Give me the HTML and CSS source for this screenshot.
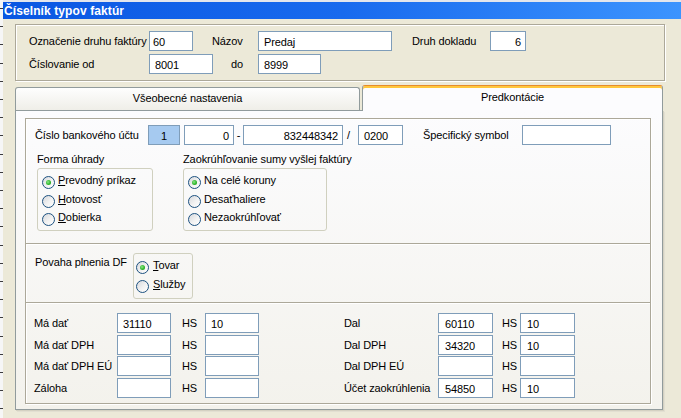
FILE: index.html
```html
<!DOCTYPE html>
<html lang="sk">
<head>
<meta charset="utf-8">
<title>Číselník typov faktúr</title>
<link rel="stylesheet" href="styles.css">
</head>
<body>
<div class="screen">
  <div class="strip"></div>
  <div class="window">
    <div class="titlebar">Číselník typov faktúr</div>
    <div class="client">
      <div class="head-box">
        <div class="head-grid">
          <span class="lbl">Označenie druhu faktúry</span>
          <div class="inp w44 pl3">60</div>
          <span class="lbl">Názov</span>
          <div class="inp w134">Predaj</div>
          <span class="lbl">Druh dokladu</span>
          <div class="inp w36 right">6</div>
          <span class="lbl">Číslovanie od</span>
          <div class="inp w64">8001</div>
          <span class="lbl pl19">do</span>
          <div class="inp w63">8999</div>
        </div>
      </div>

      <div class="tabs">
        <div class="tab tab-off">Všeobecné nastavenia</div>
        <div class="tab tab-on">Predkontácie</div>
      </div>

      <div class="panel">
        <div class="frame">
          <div class="sec sec1">
            <div class="bank-row">
              <span class="lbl bank-lbl">Číslo bankového účtu</span>
              <div class="inp w32 sel center">1</div>
              <div class="inp w50 right ml4">0</div>
              <span class="sep sep-dash">-</span>
              <div class="inp w100 right">832448342</div>
              <span class="sep sep-slash">/</span>
              <div class="inp w45">0200</div>
              <span class="lbl spec-lbl">Špecifický symbol</span>
              <div class="inp w89"></div>
            </div>
            <div class="opt-row">
              <div class="opt-col col-a">
                <span class="lbl">Forma úhrady</span>
                <div class="grp grp-a">
                  <div class="rrow"><span class="radio on"></span><span><u>P</u>revodný príkaz</span></div>
                  <div class="rrow"><span class="radio"></span><span><u>H</u>otovosť</span></div>
                  <div class="rrow"><span class="radio"></span><span><u>D</u>obierka</span></div>
                </div>
              </div>
              <div class="opt-col col-b">
                <span class="lbl">Zaokrúhľovanie sumy vyšlej faktúry</span>
                <div class="grp grp-b">
                  <div class="rrow"><span class="radio on"></span><span>Na celé koruny</span></div>
                  <div class="rrow"><span class="radio"></span><span>Desaťhaliere</span></div>
                  <div class="rrow"><span class="radio"></span><span>Nezaokrúhľovať</span></div>
                </div>
              </div>
            </div>
          </div>

          <div class="sec sec2">
            <span class="lbl povaha-lbl">Povaha plnenia DF</span>
            <div class="grp grp-c">
              <div class="rrow wide"><span class="radio on"></span><span><u>T</u>ovar</span></div>
              <div class="rrow wide"><span class="radio"></span><span><u>S</u>lužby</span></div>
            </div>
          </div>

          <div class="sec sec3">
            <div class="acc-grid">
              <span class="lbl">Má dať</span>
              <div class="inp">31110</div>
              <span class="lbl hs-l">HS</span>
              <div class="inp">10</div>
              <span></span>
              <span class="lbl">Dal</span>
              <div class="inp pl6">60110</div>
              <span class="lbl hs-r">HS</span>
              <div class="inp pl6">10</div>

              <span class="lbl">Má dať DPH</span>
              <div class="inp"></div>
              <span class="lbl hs-l">HS</span>
              <div class="inp"></div>
              <span></span>
              <span class="lbl">Dal DPH</span>
              <div class="inp pl6">34320</div>
              <span class="lbl hs-r">HS</span>
              <div class="inp pl6">10</div>

              <span class="lbl">Má dať DPH EÚ</span>
              <div class="inp"></div>
              <span class="lbl hs-l">HS</span>
              <div class="inp"></div>
              <span></span>
              <span class="lbl">Dal DPH EÚ</span>
              <div class="inp"></div>
              <span class="lbl hs-r">HS</span>
              <div class="inp"></div>

              <span class="lbl">Záloha</span>
              <div class="inp"></div>
              <span class="lbl hs-l">HS</span>
              <div class="inp"></div>
              <span></span>
              <span class="lbl">Účet zaokrúhlenia</span>
              <div class="inp pl6">54850</div>
              <span class="lbl hs-r">HS</span>
              <div class="inp pl6">10</div>
            </div>
          </div>
        </div>
      </div>
    </div>
  </div>
</div>
</body>
</html>
```

FILE: styles.css
```css
* { box-sizing: border-box; }
html, body { margin: 0; padding: 0; }
body {
  width: 681px;
  height: 418px;
  overflow: hidden;
  background: #ece9d8;
  font-family: "Liberation Sans", Arial, sans-serif;
  font-size: 11px;
  line-height: 14px;
  letter-spacing: -0.1px;
  color: #000;
}
.screen { display: flex; height: 418px; }
.strip {
  width: 3px;
  flex: none;
  background: repeating-linear-gradient(to bottom, #f6f6f6 0, #f6f6f6 8px, #3c3c3c 8px, #3c3c3c 9px, #f6f6f6 9px, #f6f6f6 18.2px);
}
.window { flex: 1; display: flex; flex-direction: column; min-width: 0; }
.titlebar {
  height: 19px;
  flex: none;
  border-top: 2px solid #e3e6ed;
  background: linear-gradient(to right, #0a57e2 0%, #186aee 50%, #3c94fe 100%);
  color: #fff;
  font-weight: bold;
  font-size: 12px;
  letter-spacing: 0.1px;
  line-height: 16px;
  padding: 1px 0 0 1px;
}
.client { flex: 1; padding: 5px 0 0 12px; }

/* generic */
.lbl { white-space: nowrap; }
.inp {
  height: 20px;
  border: 1px solid #7f9db9;
  background: #fff;
  padding: 2px 0 0 5px;
  line-height: 16px;
  white-space: nowrap;
  overflow: hidden;
}
.inp.right { text-align: right; padding-left: 0; padding-right: 4px; }
.inp.center { text-align: center; padding-left: 0; }
.inp.sel { background: #a6caf0; }
.pl3 { padding-left: 3px; }
.pl6 { padding-left: 6px; }
.pl19 { padding-left: 19px; }
.ml4 { margin-left: 4px; }
.w32 { width: 32px; }
.w36 { width: 36px; }
.w44 { width: 44px; }
.w45 { width: 45px; }
.w50 { width: 50px; }
.w63 { width: 63px; }
.w64 { width: 64px; }
.w89 { width: 89px; }
.w100 { width: 100px; }
.w134 { width: 134px; }

/* header group */
.head-box {
  width: 650px;
  height: 57px;
  border: 1px solid #aca899;
  box-shadow: inset 1px 1px 0 #fff, 1px 1px 0 #fff;
  padding: 6px 0 0 13px;
}
.head-grid {
  display: grid;
  grid-template-columns: 120px 63px 46px 154px 78px 36px;
  grid-template-rows: 20px 20px;
  row-gap: 3px;
  align-items: center;
}

/* tabs */
.tabs {
  display: flex;
  align-items: flex-end;
  gap: 2px;
  width: 648px;
  height: 25px;
  margin-top: 4px;
}
.tab {
  border: 1px solid #919b9c;
  border-bottom: none;
  border-radius: 3px 3px 0 0;
  text-align: center;
  white-space: nowrap;
}
.tab-off {
  width: 345px;
  height: 23px;
  padding-top: 3px;
  background: linear-gradient(#fefefe, #efeee8);
}
.tab-on {
  width: 301px;
  height: 26px;
  margin-bottom: -1px;
  position: relative;
  z-index: 1;
  padding-top: 4px;
  border-top-color: #e68b2c;
  box-shadow: inset 0 2px 0 #ffc73c;
  background: #fcfcfe;
}
.panel {
  width: 648px;
  height: 300px;
  border: 1px solid #919b9c;
  background: linear-gradient(#fcfcfe, #f3f2ec);
  box-shadow: 1px 1px 0 #d4d1c2, 2px 2px 0 #e2dfd1;
  padding: 7px 0 0 9px;
}
.frame {
  width: 626px;
  height: 286px;
  border: 1px solid #aca899;
  box-shadow: inset 1px 1px 0 #fff, 1px 1px 0 #fff;
  display: flex;
  flex-direction: column;
}
.sec + .sec {
  border-top: 1px solid #aca899;
  box-shadow: inset 0 1px 0 #fff;
}
.sec1 { height: 124px; padding: 6px 0 0 9px; }
.sec2 { height: 59px; padding: 9px 0 0 9px; display: flex; align-items: flex-start; }
.sec3 { height: 101px; padding: 10px 0 0 8px; }

/* bank row */
.bank-row { display: flex; align-items: center; height: 20px; }
.bank-lbl { width: 113px; }
.sep { height: 20px; line-height: 20px; }
.sep-dash { width: 9px; text-align: center; }
.sep-slash { width: 15px; padding-left: 4px; }
.spec-lbl { width: 99px; margin-left: 20px; }

/* option groups */
.opt-row { display: flex; margin-top: 7px; padding-left: 2px; }
.opt-col { display: flex; flex-direction: column; }
.col-a { width: 116px; }
.col-b { width: 144px; margin-left: 30px; }
.grp {
  border: 1px solid #d0d0bf;
  border-radius: 3px;
  margin-top: 2px;
}
.grp-a, .grp-b { height: 63px; padding: 4px 0 0 4px; }
.grp-c { width: 60px; height: 46px; padding: 4px 0 0 2px; margin-top: 0; }
.povaha-lbl { width: 98px; margin-top: 2px; }
.rrow {
  display: flex;
  align-items: flex-start;
  gap: 3px;
  height: 18.5px;
  white-space: nowrap;
}
.rrow.wide { gap: 4px; }
.radio {
  flex: none;
  width: 13px;
  height: 13px;
  margin-top: 3px;
  border-radius: 50%;
  border: 1px solid #1c5180;
  background: linear-gradient(135deg, #d6d8dc 0%, #f2f2f2 55%, #ffffff 100%);
  display: flex;
  align-items: center;
  justify-content: center;
}
.radio.on::after {
  content: "";
  width: 5px;
  height: 5px;
  border-radius: 50%;
  background: radial-gradient(circle at 40% 40%, #8ee68a 0%, #2fb82b 55%, #1a8c18 100%);
}
u { text-decoration: underline; text-underline-offset: 1px; }

/* account grid */
.acc-grid {
  display: grid;
  grid-template-columns: 83px 54px 34px 54px 85px 94px 55px 27px 55px;
  grid-template-rows: repeat(4, 20px);
  row-gap: 1.67px;
  align-items: center;
}
.hs-l { padding-left: 11px; }
.hs-r { padding-left: 9px; }
```
